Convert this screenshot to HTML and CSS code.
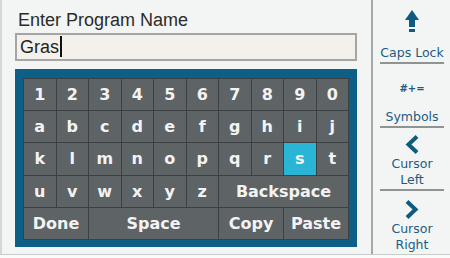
FILE: index.html
```html
<!DOCTYPE html>
<html lang="en">
<head>
    <meta charset="UTF-8">
    <title>Enter Program Name</title>
    <link rel="stylesheet" href="styles.css">
</head>
<body>
    <div class="screen">
        <div class="main">
            <h1 class="title">Enter Program Name</h1>
            <div class="name-input">Gras<span class="caret"></span></div>

            <div class="keyboard">
                <div class="keys">
                    <div class="key">1</div>
                    <div class="key">2</div>
                    <div class="key">3</div>
                    <div class="key">4</div>
                    <div class="key">5</div>
                    <div class="key">6</div>
                    <div class="key">7</div>
                    <div class="key">8</div>
                    <div class="key">9</div>
                    <div class="key">0</div>

                    <div class="key">a</div>
                    <div class="key">b</div>
                    <div class="key">c</div>
                    <div class="key">d</div>
                    <div class="key">e</div>
                    <div class="key">f</div>
                    <div class="key">g</div>
                    <div class="key">h</div>
                    <div class="key">i</div>
                    <div class="key">j</div>

                    <div class="key">k</div>
                    <div class="key">l</div>
                    <div class="key">m</div>
                    <div class="key">n</div>
                    <div class="key">o</div>
                    <div class="key">p</div>
                    <div class="key">q</div>
                    <div class="key">r</div>
                    <div class="key active">s</div>
                    <div class="key">t</div>

                    <div class="key">u</div>
                    <div class="key">v</div>
                    <div class="key">w</div>
                    <div class="key">x</div>
                    <div class="key">y</div>
                    <div class="key">z</div>
                    <div class="key wide-4">Backspace</div>

                    <div class="key wide-2">Done</div>
                    <div class="key wide-4">Space</div>
                    <div class="key wide-2">Copy</div>
                    <div class="key wide-2">Paste</div>
                </div>
            </div>
        </div>

        <div class="sidebar">
            <div class="side-item caps">
                <svg class="icon-up" width="14" height="22" viewBox="0 0 14 22">
                    <polygon points="7,0 14,10 10,10 10,17 4,17 4,10 0,10" fill="#0e5a80"/>
                    <rect x="4" y="19" width="6" height="3" fill="#0e5a80"/>
                </svg>
                <span class="side-label">Caps Lock</span>
            </div>
            <div class="side-item symbols">
                <span class="sym-glyph">#+=</span>
                <span class="side-label">Symbols</span>
            </div>
            <div class="side-item cursor">
                <svg class="chevron" width="14" height="19" viewBox="0 0 14 19">
                    <polyline points="12,1.5 3.5,9.5 12,17.5" fill="none" stroke="#0e5a80" stroke-width="4"/>
                </svg>
                <span class="side-label">Cursor<br>Left</span>
            </div>
            <div class="side-item cursor last">
                <svg class="chevron" width="14" height="19" viewBox="0 0 14 19">
                    <polyline points="2,1.5 10.5,9.5 2,17.5" fill="none" stroke="#0e5a80" stroke-width="4"/>
                </svg>
                <span class="side-label">Cursor<br>Right</span>
            </div>
        </div>
    </div>
</body>
</html>
```

FILE: styles.css
```css
*
{
    margin: 0;
    padding: 0;
    box-sizing: border-box;
}

body
{
    width: 450px;
    height: 258px;
    overflow: hidden;
    background-color: #fafbfb;
}

.screen
{
    display: flex;
    width: 450px;
    height: 255px;
    background-color: #f2f5f4;
    border-left: 2px solid #d3d7d7;
    border-bottom: 1px solid #c6cbcb;
}

.main
{
    width: 369px;
    padding: 10px 14px 0 13px;
}

.title
{
    font-family: "Liberation Sans", Arial, sans-serif;
    font-size: 18px;
    font-weight: normal;
    line-height: 20px;
    color: #2b2b2b;
    padding-left: 3px;
}

.name-input
{
    margin-top: 3px;
    height: 28px;
    background-color: #f4f0eb;
    border: 2px solid #a4a6a6;
    padding-left: 3px;
    font-family: "Liberation Sans", Arial, sans-serif;
    font-size: 18px;
    line-height: 24px;
    color: #1e1e1e;
}

.caret
{
    display: inline-block;
    width: 2px;
    height: 21px;
    margin-left: 1px;
    vertical-align: -4px;
    background-color: #111;
}

.keyboard
{
    margin-top: 8px;
    height: 178px;
    background-color: #0d5f86;
    padding: 9px 8px 7px 8px;
}

.keys
{
    display: grid;
    grid-template-columns: repeat(10, 1fr);
    grid-template-rows: repeat(5, 1fr);
    gap: 1px;
    height: 162px;
    background-color: #3b3f41;
    border: 1px solid #3b3f41;
}

.key
{
    display: flex;
    align-items: center;
    justify-content: center;
    background-color: #5e6366;
    color: #f3f3f3;
    font-family: "DejaVu Sans", Verdana, sans-serif;
    font-weight: bold;
    font-size: 16px;
}

.key.active
{
    background-color: #2ab5d7;
}

.wide-2
{
    grid-column: span 2;
}

.wide-4
{
    grid-column: span 4;
}

.sidebar
{
    width: 79px;
    border-left: 2px solid #a3a8a8;
    display: flex;
    flex-direction: column;
}

.side-item
{
    height: 64px;
    margin: 0 6px 0 7px;
    border-bottom: 2px solid #8e9394;
    display: flex;
    flex-direction: column;
    align-items: center;
    justify-content: flex-end;
    padding-bottom: 1px;
}

.side-item.last
{
    border-bottom: none;
    height: 63px;
}

.side-label
{
    font-family: "DejaVu Sans", Verdana, sans-serif;
    font-size: 12.5px;
    line-height: 16px;
    color: #1d5b82;
    text-align: center;
}

.icon-up
{
    margin-bottom: 13px;
}

.sym-glyph
{
    font-family: "DejaVu Sans", Verdana, sans-serif;
    font-weight: bold;
    font-size: 10px;
    color: #1d5b82;
    margin-bottom: 15px;
}

.chevron
{
    margin-bottom: 2px;
}
```
